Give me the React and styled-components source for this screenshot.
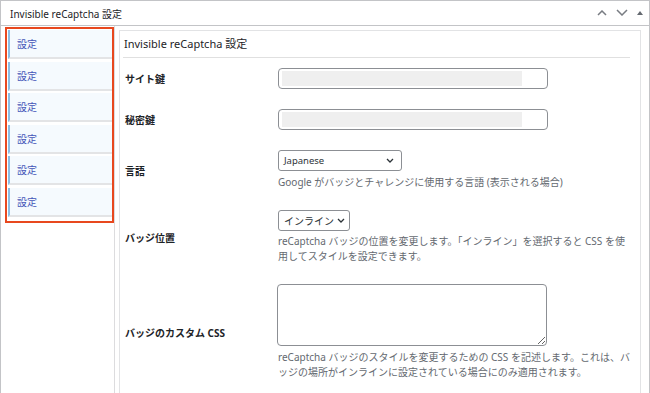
import styled, { createGlobalStyle } from 'styled-components'

const GlobalStyle = createGlobalStyle`
  html, body {
    margin: 0;
    padding: 0;
    background: #fff;
    overflow: hidden;
  }
  body {
    font-family: 'Noto Sans', 'Noto Sans CJK JP', sans-serif;
    color: #1d2327;
  }
`

const tabs = ['設定', '設定', '設定', '設定', '設定', '設定']

function App() {
  return (
    <>
      <GlobalStyle />
      <Panel>
        <TitleBar>
          <TitleText>Invisible reCaptcha 設定</TitleText>
          <TitleIcons>
            <svg width="10" height="6" viewBox="0 0 10 6">
              <path d="M1 5 L5 1 L9 5" fill="none" stroke="#787c82" strokeWidth="1.5" />
            </svg>
            <svg width="12" height="7" viewBox="0 0 12 7">
              <path d="M1 1 L6 6 L11 1" fill="none" stroke="#787c82" strokeWidth="1.5" />
            </svg>
            <svg width="6" height="4" viewBox="0 0 6 4">
              <path d="M0 4 L3 0 L6 4 Z" fill="#646970" />
            </svg>
          </TitleIcons>
        </TitleBar>
        <Body>
          <Sidebar>
            <RedFrame>
              {tabs.map((t, i) => (
                <Tab key={i}>{t}</Tab>
              ))}
            </RedFrame>
          </Sidebar>
          <Content>
            <Heading>Invisible reCaptcha 設定</Heading>
            <Form>
              <Label>サイト鍵</Label>
              <Field>
                <TextInput><Masked /></TextInput>
              </Field>

              <Label>秘密鍵</Label>
              <Field>
                <TextInput><Masked /></TextInput>
              </Field>

              <Label>言語</Label>
              <Field>
                <SelectBox width={124}>
                  <span>Japanese</span>
                  <Chevron />
                </SelectBox>
                <Desc gap={4}>Google がバッジとチャレンジに使用する言語 (表示される場合)</Desc>
              </Field>

              <Label>バッジ位置</Label>
              <Field>
                <SelectBox width={72} big>
                  <span>インライン</span>
                  <Chevron />
                </SelectBox>
                <Desc gap={3}>reCaptcha バッジの位置を変更します。「インライン」を選択すると CSS を使用してスタイルを設定できます。</Desc>
              </Field>

              <Label>バッジのカスタム CSS</Label>
              <Field>
                <TextArea readOnly />
                <Desc gap={4}>reCaptcha バッジのスタイルを変更するための CSS を記述します。これは、バッジの場所がインラインに設定されている場合にのみ適用されます。</Desc>
              </Field>
            </Form>
          </Content>
        </Body>
      </Panel>
    </>
  )
}

function Chevron() {
  return (
    <svg width="8" height="5" viewBox="0 0 8 5">
      <path d="M1 1 L4 4 L7 1" fill="none" stroke="#2c3338" strokeWidth="1.3" />
    </svg>
  )
}

const Panel = styled.div`
  width: 648px;
  height: 420px;
  border: 1px solid #c3c4c7;
  display: flex;
  flex-direction: column;
`

const TitleBar = styled.div`
  height: 24px;
  border-bottom: 1px solid #c3c4c7;
  display: flex;
  align-items: center;
  justify-content: space-between;
  padding: 0 6px 0 9px;
`

const TitleText = styled.div`
  font-size: 10px;
  color: #1d2327;
`

const TitleIcons = styled.div`
  display: flex;
  align-items: center;
  gap: 9px;
  padding-bottom: 1px;
`

const Body = styled.div`
  flex: 1;
  display: flex;
  align-items: stretch;
`

const Sidebar = styled.div`
  width: 109px;
  padding: 1px 0 0 4px;
  border-right: 1px solid #dcdcde;
`

const RedFrame = styled.div`
  border: 2px solid #e8481e;
  padding: 1px 0 4px 1px;
  display: flex;
  flex-direction: column;
  gap: 2.6px;
`

const Tab = styled.div`
  height: 27px;
  background: #f5fafe;
  border-left: 2px solid #8cbde3;
  border-bottom: 2px solid #e3e4e6;
  padding-left: 7px;
  display: flex;
  align-items: center;
  font-size: 10px;
  color: #4455b8;
`

const Content = styled.div`
  flex: 1;
  margin: 4px 8px 0 4px;
  border: 1px solid #e2e3e5;
  border-bottom: none;
  padding: 0 10px 0 3px;
`

const Heading = styled.div`
  font-size: 11px;
  line-height: 18px;
  padding: 4px 0 4px 1px;
  border-bottom: 1px solid #e0e0e0;
  color: #1d2327;
`

const Form = styled.div`
  display: grid;
  grid-template-columns: 153px 1fr;
  row-gap: 20px;
  align-items: center;
  padding: 10px 0 0 2px;
`

const Label = styled.div`
  font-size: 10px;
  font-weight: 700;
  color: #1d2327;
`

const Field = styled.div`
  display: flex;
  flex-direction: column;
  align-items: flex-start;
`

const TextInput = styled.div`
  box-sizing: border-box;
  width: 270px;
  height: 21px;
  border: 1px solid #8c8f94;
  border-radius: 4px;
  padding: 2px 3px;
  background: #fff;
`

const Masked = styled.div`
  width: 240px;
  height: 15px;
  background: #efefef;
`

const SelectBox = styled.div`
  box-sizing: border-box;
  width: ${p => p.width}px;
  height: 21px;
  border: 1px solid #8c8f94;
  border-radius: 3px;
  display: flex;
  align-items: center;
  justify-content: space-between;
  padding: 0 ${p => (p.big ? 4 : 7)}px 0 5px;
  font-size: ${p => (p.big ? 10 : 9.5)}px;
  white-space: nowrap;
  color: #2c3338;
`

const Desc = styled.div`
  margin-top: ${p => p.gap}px;
  max-width: 358px;
  font-size: 10px;
  line-height: 15px;
  color: #646970;
`

const TextArea = styled.textarea`
  box-sizing: border-box;
  display: block;
  width: 270px;
  height: 62px;
  margin: 0 0 0 -1px;
  border: 1px solid #8c8f94;
  border-radius: 4px;
  background: #fff;
  font-family: inherit;
  outline: none;
`

export default App
